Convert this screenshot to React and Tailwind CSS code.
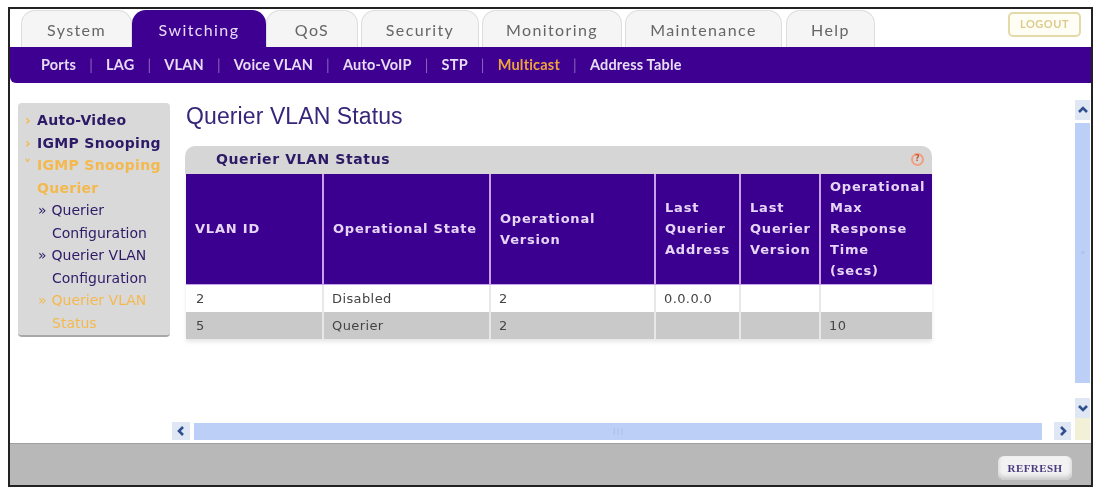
import React from "react";

const tabs = [
  ["System", "w-[111px]", false, "ml-0"],
  ["Switching", "w-[134px]", true, "ml-0"],
  ["QoS", "w-[92px]", false, "ml-0"],
  ["Security", "w-[118px]", false, "ml-[3px]"],
  ["Monitoring", "w-[140px]", false, "ml-[3px]"],
  ["Maintenance", "w-[157px]", false, "ml-[3px]"],
  ["Help", "w-[89px]", false, "ml-[4px]"],
];
const sub = ["Ports", "LAG", "VLAN", "Voice VLAN", "Auto-VoIP", "STP", "Multicast", "Address Table"];

function Chevron({ d, className }) {
  return (
    <svg width="12" height="12" viewBox="0 0 12 12" className={className} fill="none" stroke="#2f4f8f" strokeWidth="2.6">
      <path d={d} />
    </svg>
  );
}

const th = "border-l-2 border-[#c9a0ea] bg-[#3b0090] px-[9px] text-left align-middle font-bold text-[#e6d5f5] tracking-[0.8px] first:border-l-0";
const td = "border-l-2 border-[#e8e8e8] px-[8px] align-middle first:border-l-0 first:px-[10px]";

function Nav({ children, tone = "dark", indent = "pl-[19px]" }) {
  const c = tone === "dark" ? "text-[#2d1a66]" : "text-[#f4b94e]";
  return <div className={`${indent} ${c}`}>{children}</div>;
}

export default function App() {
  return (
    <div className="h-[490px] w-[1101px] bg-white pl-[8px] pt-[7px] blur-[0.6px]">
      <div className="flex h-[480px] w-[1085px] flex-col border-2 border-[#222222] bg-white">
        {/* tabs */}
        <div className="flex h-[38px] shrink-0 items-end pl-[11px] pr-[10px] font-['Lato',sans-serif] text-[16px] tracking-[1.4px]">
          {tabs.map(([t, w, active, ml]) => (
            <div
              key={t}
              className={
                active
                  ? `${w} ${ml} flex h-[37px] items-center justify-center rounded-t-[14px] bg-[#3d0090] pt-[2px] text-[#e8dcf5]`
                  : `${w} ${ml} flex h-[37px] items-center justify-center rounded-t-[14px] border border-b-0 border-[#dddddd] bg-[#f5f5f5] pt-[2px] text-[#666666]`
              }
            >
              {t}
            </div>
          ))}
          <div className="mb-[10px] ml-auto flex h-[25px] w-[73px] items-center justify-center rounded-[5px] border-2 border-[#e4d9a8] bg-[#fffef5] text-[11px] font-bold tracking-[0.5px] text-[#dccb8c]">
            LOGOUT
          </div>
        </div>
        {/* purple sub nav */}
        <div className="flex h-[36px] shrink-0 items-center rounded-bl-[6px] bg-[#3d0090] pl-[31px] font-['Lato',sans-serif] text-[14.5px] font-bold tracking-[0.2px] text-[#e8dcf5]">
          {sub.map((s, i) => (
            <React.Fragment key={s}>
              <span className={s === "Multicast" ? "text-[#f0a33c]" : ""}>{s}</span>
              {i < sub.length - 1 && <span className="mx-[13px] font-normal text-[#8a66c0]">|</span>}
            </React.Fragment>
          ))}
        </div>
        {/* main */}
        <div className="flex min-h-0 flex-1">
          <div className="flex min-w-0 flex-1 flex-col">
            <div className="flex min-h-0 flex-1 pl-[8px] pt-[20px]">
              <aside className="h-[234px] w-[152px] shrink-0 rounded-[4px] border-b-2 border-[#a8a8a8] bg-[#d9d9d9] pt-[6px] font-['DejaVu_Sans',sans-serif] text-[14px] leading-[22.5px]">
                <div className="relative font-bold tracking-[0.3px] text-[#2d1a66]">
                  <span className="absolute left-[7px] text-[#f4b94e]">›</span>
                  <Nav>Auto-Video</Nav>
                  <span className="absolute left-[7px] text-[#f4b94e]">›</span>
                  <Nav>IGMP Snooping</Nav>
                  <span className="absolute left-[6px] text-[#f4b94e]">˅</span>
                  <Nav tone="o">IGMP Snooping</Nav>
                  <Nav tone="o">Querier</Nav>
                </div>
                <div className="relative font-normal">
                  <Nav indent="pl-[20px]"><span className="mr-[5px]">»</span>Querier</Nav>
                  <Nav indent="pl-[34px]">Configuration</Nav>
                  <Nav indent="pl-[20px]"><span className="mr-[5px]">»</span>Querier VLAN</Nav>
                  <Nav indent="pl-[34px]">Configuration</Nav>
                  <Nav tone="o" indent="pl-[20px]"><span className="mr-[5px]">»</span>Querier VLAN</Nav>
                  <Nav tone="o" indent="pl-[34px]">Status</Nav>
                </div>
              </aside>
              <main className="min-w-0 flex-1 pl-[15px]">
                <h1 className="h-[43px] pl-[1px] font-['Liberation_Sans',sans-serif] text-[23px] leading-[26px] tracking-[0.1px] text-[#37267a]">
                  Querier VLAN Status
                </h1>
                <div className="w-[747px]">
                  <div className="flex h-[28px] items-center justify-between rounded-t-[10px] bg-[#d6d6d6] pb-[2px] pl-[31px] pr-[8px] font-['DejaVu_Sans',sans-serif] text-[14px] font-bold tracking-[0.6px] text-[#2d1a66]">
                    Querier VLAN Status
                    <span className="flex h-[13px] w-[13px] items-center justify-center rounded-full border-2 border-[#f0a080] text-[8px] text-[#d05030]">?</span>
                  </div>
                  <table className="ml-[1px] w-[746px] table-fixed border-collapse font-['DejaVu_Sans',sans-serif] text-[13px] leading-[21px] shadow-[0_3px_4px_#e8e8e8]">
                    <colgroup>
                      <col className="w-[137px]" />
                      <col className="w-[167px]" />
                      <col className="w-[165px]" />
                      <col className="w-[85px]" />
                      <col className="w-[80px]" />
                      <col className="w-[112px]" />
                    </colgroup>
                    <thead>
                      <tr className="h-[110px]">
                        <th className={th}>VLAN ID</th>
                        <th className={th}>Operational State</th>
                        <th className={th}>Operational<br />Version</th>
                        <th className={th}>Last<br />Querier<br />Address</th>
                        <th className={th}>Last<br />Querier<br />Version</th>
                        <th className={th}>Operational<br />Max<br />Response<br />Time<br />(secs)</th>
                      </tr>
                    </thead>
                    <tbody className="tracking-[0.4px] text-[#444444]">
                      <tr className="h-[28px] border-t border-[#c9a0ea] bg-white">
                        <td className={td}>2</td><td className={td}>Disabled</td><td className={td}>2</td><td className={td}>0.0.0.0</td><td className={td}></td><td className={td}></td>
                      </tr>
                      <tr className="h-[27px] bg-[#c9c9c9]">
                        <td className={td}>5</td><td className={td}>Querier</td><td className={td}>2</td><td className={td}></td><td className={td}></td><td className={td}>10</td>
                      </tr>
                    </tbody>
                  </table>
                </div>
              </main>
            </div>
            {/* horizontal scrollbar */}
            <div className="mb-[3px] flex h-[18px] shrink-0 items-center pl-[162px] pr-[4px]">
              <div className="flex h-[18px] w-[18px] items-center justify-center bg-[#dfe7f5]">
                <Chevron d="M8 2 L4 6 L8 10" />
              </div>
              <div className="ml-[4px] flex h-[17px] w-[849px] items-center justify-center bg-[#bcd0f7] text-[7px] text-[#9fb4de]">|||</div>
              <div className="ml-[12px] flex h-[18px] w-[17px] items-center justify-center bg-[#dfe7f5]">
                <Chevron d="M4 2 L8 6 L4 10" />
              </div>
            </div>
          </div>
          {/* vertical scrollbar */}
          <div className="mr-[1px] flex w-[15px] shrink-0 flex-col pt-[17px]">
            <div className="flex h-[20px] items-center justify-center bg-[#dfe7f5]">
              <Chevron d="M2 8 L6 4 L10 8" />
            </div>
            <div className="mt-[3px] flex h-[260px] items-center justify-center bg-[#bcd0f7] text-[7px] text-[#9fb4de]">≡</div>
            <div className="mt-[15px] flex h-[20px] items-center justify-center bg-[#dfe7f5]">
              <Chevron d="M2 4 L6 8 L10 4" />
            </div>
            <div className="h-[22px] bg-[#f3f0d8]"></div>
          </div>
        </div>
        {/* footer */}
        <div className="flex h-[42px] shrink-0 items-center justify-end border-t border-[#a0a0a0] bg-[#b8b8b8] pr-[19px] pt-[7px]">
          <div className="flex h-[24px] w-[74px] items-center justify-center rounded-[6px] bg-[#f2f2f2] font-['Liberation_Serif',serif] text-[11px] font-bold tracking-[0.4px] text-[#4a3a80] shadow-[inset_0_-3px_4px_#c8c8c8]">
            REFRESH
          </div>
        </div>
      </div>
    </div>
  );
}
